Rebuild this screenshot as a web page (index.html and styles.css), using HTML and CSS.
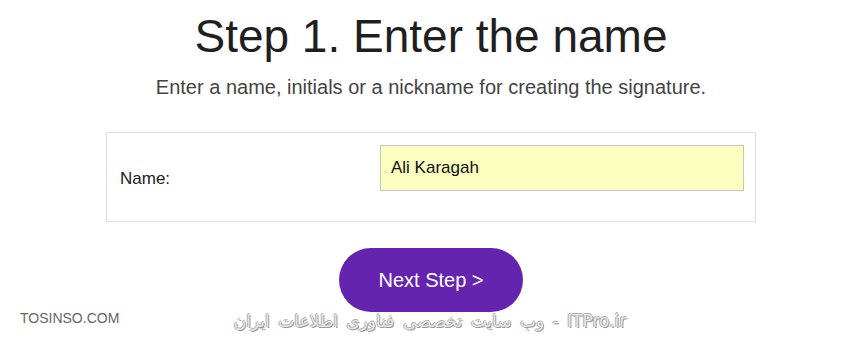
FILE: index.html
```html
<!DOCTYPE html>
<html lang="en">
<head>
    <meta charset="UTF-8">
    <meta name="viewport" content="width=device-width, initial-scale=1.0">
    <title>Step 1. Enter the name</title>
    <link rel="stylesheet" href="styles.css">
</head>
<body>
    <div class="step">
        <h1>Step 1. Enter the name</h1>
        <p class="hint">Enter a name, initials or a nickname for creating the signature.</p>
        <form class="name-form">
            <div class="field">
                <label for="sig-name">Name:</label>
                <input type="text" id="sig-name" name="sig-name" value="Ali Karagah">
            </div>
            <button type="button" class="next-btn">Next Step &gt;</button>
        </form>
    </div>
    <div class="mark-left">TOSINSO.COM</div>
    <div class="mark-center" dir="rtl"><span dir="ltr">ITPro.ir</span> - وب سایت تخصصی فناوری اطلاعات ایران</div>
</body>
</html>
```

FILE: styles.css
```css
body {
    font-family: "Liberation Sans", Arial, sans-serif;
    margin: 0;
    padding: 0 0 0 4px;
    background-color: #fff;
    color: #222;
}
.step {
    width: 650px;
    margin: 0 auto;
    text-align: center;
}
h1 {
    margin: 9px 0 0;
    font-size: 46px;
    font-weight: normal;
    color: #1f1f1f;
}
.hint {
    margin: 13px 0 0;
    font-size: 20px;
    color: #444;
}
.name-form {
    margin-top: 33px;
}
.field {
    display: grid;
    grid-template-columns: 260px 1fr;
    align-items: center;
    padding: 12px 11px 30px 13px;
    border: 1px solid #dedede;
    text-align: left;
}
.field label {
    font-size: 17px;
    color: #222;
    padding-top: 22px;
}
.field input {
    height: 46px;
    box-sizing: border-box;
    padding: 0 10px;
    font-family: inherit;
    font-size: 17px;
    color: #111;
    background-color: #fcfec0;
    border: 1px solid #c8c8b8;
}
.next-btn {
    margin-top: 26px;
    width: 184px;
    height: 64px;
    border: none;
    border-radius: 32px;
    background-color: #6424b0;
    color: #fff;
    font-family: inherit;
    font-size: 20px;
    cursor: pointer;
}
.mark-left {
    position: absolute;
    left: 20px;
    top: 310px;
    font-size: 14px;
    color: #666;
}
.mark-center {
    position: absolute;
    left: 130px;
    width: 600px;
    top: 311px;
    text-align: center;
    white-space: nowrap;
    font-family: "DejaVu Sans", sans-serif;
    font-size: 17px;
    word-spacing: 3px;
    color: #e6e6e6;
    text-shadow: 1px 1px 0 #999, -1px 0 0 #b0b0b0, 0 -1px 0 #b0b0b0;
}
```
